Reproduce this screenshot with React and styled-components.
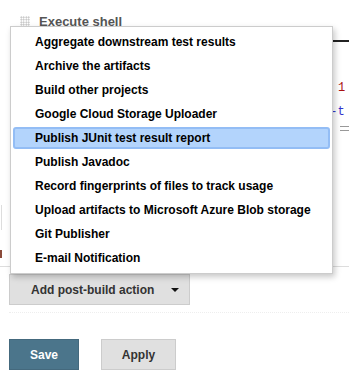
import styled, { createGlobalStyle } from 'styled-components';

const GlobalStyle = createGlobalStyle`
  html, body {
    margin: 0;
    padding: 0;
    background: #fff;
    overflow: hidden;
  }
  body {
    font-family: "Liberation Sans", Arial, sans-serif;
    width: 349px;
    height: 383px;
  }
`;

const Page = styled.div`
  position: relative;
  width: 349px;
  height: 383px;
  overflow: hidden;
`;

const StepHeader = styled.div`
  display: flex;
  align-items: center;
  gap: 9px;
  padding: 13px 0 0 20px;
  height: 16px;
`;

const Handle = styled.div`
  width: 10px;
  height: 10px;
  background-image: radial-gradient(circle, #bbb 0.8px, transparent 0.9px);
  background-size: 2.5px 2.5px;
`;

const StepTitle = styled.span`
  font-size: 13px;
  font-weight: bold;
  color: #555;
`;

const StepBody = styled.div`
  display: flex;
  height: 237px;
`;

const LeftRail = styled.div`
  width: 9px;
  padding-top: 176px;
  display: flex;
  flex-direction: column;
  align-items: flex-end;
  gap: 20px;
`;

const RailLine = styled.div`
  width: 1px;
  height: 25px;
  background: #ddd;
`;

const RailMark = styled.div`
  width: 2px;
  height: 8px;
  background: #8a4a3a;
`;

const CodeArea = styled.div`
  flex: 1;
  margin: 11px 0 0 320px;
  border-top: 2px solid #222;
  font-family: "Liberation Mono", monospace;
  font-size: 12px;
  display: flex;
  flex-direction: column;
`;

const CodeLine = styled.div`
  height: ${(p) => p.$height || 24}px;
  line-height: ${(p) => p.$height || 24}px;
  white-space: nowrap;
  color: ${(p) => p.$color || '#333'};
  padding-left: ${(p) => p.$indent || 0}px;
`;

const Grip = styled.div`
  margin: 2px 0 0 18px;
  width: 14px;
  height: 3px;
  border-top: 1px solid #999;
  border-bottom: 1px solid #999;
`;

const Divider = styled.div`
  height: 1px;
  background: #ddd;
`;

const ActionRow = styled.div`
  padding: 7px 0 0 9px;
`;

const DropButton = styled.button`
  display: flex;
  align-items: center;
  width: 181px;
  height: 31px;
  padding: 0 0 0 21px;
  background: #e0e0e0;
  border: 1px solid #ccc;
  font-family: "Liberation Sans", Arial, sans-serif;
  font-size: 12px;
  font-weight: bold;
  color: #333;
  cursor: pointer;
`;

const Caret = styled.span`
  margin-left: auto;
  margin-right: 10px;
  width: 0;
  height: 0;
  border-left: 4px solid transparent;
  border-right: 4px solid transparent;
  border-top: 4px solid #111;
`;

const Dotted = styled.div`
  margin: 7px 0 0 9px;
  border-top: 1px dotted #eee;
`;

const FormButtons = styled.div`
  display: flex;
  gap: 22px;
  padding: 26px 0 0 9px;
`;

const FormButton = styled.button`
  height: 31px;
  width: ${(p) => p.$width}px;
  border: 1px solid ${(p) => (p.$primary ? '#44697d' : '#ccc')};
  background: ${(p) => (p.$primary ? '#4b758b' : '#e0e0e0')};
  color: ${(p) => (p.$primary ? '#fff' : '#333')};
  font-family: "Liberation Sans", Arial, sans-serif;
  font-size: 12px;
  font-weight: bold;
`;

const Menu = styled.ul`
  position: absolute;
  left: 10px;
  top: 26px;
  width: 321px;
  margin: 0;
  padding: 3px 0;
  list-style: none;
  background: #fff;
  border: 1px solid #ccc;
  box-shadow: 2px 3px 6px rgba(0, 0, 0, 0.22);
`;

const MenuItem = styled.li`
  height: ${(p) => (p.$active ? 18 : 24)}px;
  line-height: ${(p) => (p.$active ? 18 : 24)}px;
  margin: ${(p) => (p.$active ? '1px 2px' : '0')};
  padding-left: ${(p) => (p.$active ? 20 : 24)}px;
  font-size: 12px;
  font-weight: bold;
  color: #000;
  white-space: nowrap;
  background: ${(p) => (p.$active ? '#b3d4fc' : 'transparent')};
  border: ${(p) => (p.$active ? '2px solid #93bdf5' : 'none')};
  border-radius: ${(p) => (p.$active ? 3 : 0)}px;
`;

const items = [
  'Aggregate downstream test results',
  'Archive the artifacts',
  'Build other projects',
  'Google Cloud Storage Uploader',
  'Publish JUnit test result report',
  'Publish Javadoc',
  'Record fingerprints of files to track usage',
  'Upload artifacts to Microsoft Azure Blob storage',
  'Git Publisher',
  'E-mail Notification',
];

export default function App() {
  return (
    <Page>
      <GlobalStyle />
      <StepHeader>
        <Handle />
        <StepTitle>Execute shell</StepTitle>
      </StepHeader>
      <StepBody>
        <LeftRail>
          <RailLine />
          <RailMark />
        </LeftRail>
        <CodeArea>
          <CodeLine $height={34} />
          <CodeLine $color="#a11" $indent={16}>1</CodeLine>
          <CodeLine $color="#33c" $indent={1}>n-t</CodeLine>
          <Grip />
        </CodeArea>
      </StepBody>
      <Divider />
      <ActionRow>
        <DropButton>
          Add post-build action
          <Caret />
        </DropButton>
      </ActionRow>
      <Dotted />
      <FormButtons>
        <FormButton $primary $width={70}>Save</FormButton>
        <FormButton $width={75}>Apply</FormButton>
      </FormButtons>
      <Menu>
        {items.map((it, i) => (
          <MenuItem key={it} $active={i === 4}>
            {it}
          </MenuItem>
        ))}
      </Menu>
    </Page>
  );
}
